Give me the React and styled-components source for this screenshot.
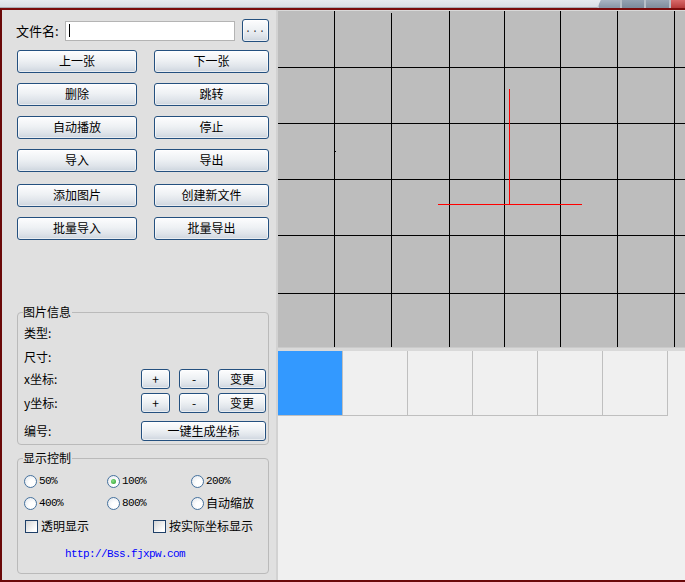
import React from 'react';
import styled, { createGlobalStyle } from 'styled-components';

// Global
const GlobalStyle = createGlobalStyle`
  html, body {
    margin: 0;
    padding: 0;
    background: #e0e0e0;
  }
  body {
    font-family: "Noto Sans CJK SC", "Noto Sans", sans-serif;
    font-size: 12px;
    color: #000;
  }
`;

// Frame
const Frame = styled.div`
  width: 685px;
  height: 582px;
  overflow: hidden;
  display: flex;
  flex-direction: column;
`;

const TopBar = styled.div`
  height: 8px;
  flex: none;
  display: flex;
  background: linear-gradient(#e7ebef, #d8dde3);
  box-shadow: inset 0 -1px 0 #a9afb6;
`;

const TopFill = styled.div`
  flex: 1;
`;

const Caption = styled.div`
  display: flex;
  width: 88px;
  clip-path: polygon(4px 0, 100% 0, 100% 100%, 0 100%);
  background: #b8c0c9;
`;

const CaptionBtn = styled.div`
  width: ${(p) => p.$w}px;
  margin-left: 2px;
  background: linear-gradient(${(p) => p.$top}, ${(p) => p.$bottom});
`;

const Window = styled.div`
  flex: 1;
  min-height: 0;
  display: flex;
  border-top: 2px solid #7a0c0c;
  border-left: 2px solid #6a0909;
  border-bottom: 2px solid #6a0909;
`;

// Left panel
const LeftPanel = styled.div`
  width: 274px;
  flex: none;
  display: flex;
  flex-direction: column;
  padding-top: 9px;
  background: #e0e0e0;
`;

const FileRow = styled.div`
  display: flex;
  align-items: center;
  height: 23px;
  padding-left: 14px;
`;

const FileLabel = styled.span`
  width: 49px;
  font-size: 13px;
  line-height: 16px;
`;

const FileInput = styled.div`
  box-sizing: border-box;
  width: 170px;
  height: 20px;
  display: flex;
  align-items: center;
  padding-left: 3px;
  background: #fff;
  border: 1px solid #b4b4b4;
`;

const Caret = styled.span`
  width: 1px;
  height: 13px;
  background: #000;
`;

const Btn = styled.button`
  box-sizing: border-box;
  width: ${(p) => (p.$w ? `${p.$w}px` : 'auto')};
  height: ${(p) => p.$h || 23}px;
  margin-top: ${(p) => p.$mt || 0}px;
  padding: 0 0 1px;
  border: 1px solid #24507f;
  border-radius: 3px;
  background: linear-gradient(#fdfdfe 0%, #eef1f4 45%, #dfe4ea 75%, #cdd5de 100%);
  box-shadow: inset 0 0 0 1px rgba(255, 255, 255, 0.55);
  font-family: "Noto Sans CJK SC", sans-serif;
  font-size: 12px;
  line-height: 14px;
  color: #000;
  text-align: center;
`;

const DotsBtn = styled(Btn)`
  margin-left: 7px;
  font-family: "Liberation Mono", monospace;
  font-size: 10px;
  letter-spacing: 1px;
  color: #333;
`;

const ButtonGrid = styled.div`
  display: grid;
  grid-template-columns: 120px 115px;
  column-gap: 17px;
  row-gap: 10px;
  margin: 8px 0 0 15px;
`;

const Group = styled.fieldset`
  box-sizing: border-box;
  width: 252px;
  min-width: 0;
  margin: ${(p) => p.$mt}px 0 0 15px;
  padding: ${(p) => p.$pad};
  border: 1px solid #bababa;
  border-radius: 4px;
`;

const Legend = styled.legend`
  padding: 0 1px 0 0;
  margin-left: -1px;
  font-size: 12px;
  line-height: 14px;
`;

const InfoList = styled.div`
  display: flex;
  flex-direction: column;
`;

const InfoRow = styled.div`
  display: flex;
  align-items: center;
  gap: 9px;
  height: 20px;
  margin-top: ${(p) => p.$mt || 0}px;
`;

const InfoLabel = styled.span`
  flex: 1;
  line-height: 14px;
`;

const RadioGrid = styled.div`
  display: grid;
  grid-template-columns: 83px 84px 1fr;
  grid-auto-rows: 18px;
  row-gap: 4px;
`;

const Option = styled.label`
  display: flex;
  align-items: center;
  gap: 2px;
`;

const Radio = styled.span`
  position: relative;
  box-sizing: border-box;
  width: 13px;
  height: 13px;
  border-radius: 50%;
  border: 1px solid #46729e;
  background: radial-gradient(circle at 65% 65%, #ffffff 30%, #dfe4ea 100%);

  &::after {
    content: '';
    display: ${(p) => (p.$on ? 'block' : 'none')};
    position: absolute;
    left: 3px;
    top: 3px;
    width: 5px;
    height: 5px;
    border-radius: 50%;
    background: radial-gradient(circle at 40% 40%, #8be08b, #1f9a1f);
  }
`;

const OptionText = styled.span`
  font-family: ${(p) => (p.$mono ? '"Liberation Mono", monospace' : '"Noto Sans CJK SC", sans-serif')};
  font-size: ${(p) => (p.$mono ? 11 : 12)}px;
  letter-spacing: ${(p) => (p.$mono ? '-0.6px' : '0')};
  line-height: 14px;
`;

const CheckRow = styled.div`
  display: grid;
  grid-template-columns: 128px 1fr;
  height: 18px;
  margin-top: 5px;
  padding-left: 1px;
`;

const CheckBox = styled.span`
  box-sizing: border-box;
  width: 13px;
  height: 13px;
  margin-right: 1px;
  border: 1px solid #1f4068;
  background: linear-gradient(135deg, #d4d4d4, #ffffff 80%);
`;

const Link = styled.a`
  display: block;
  margin-top: 12px;
  padding-left: 41px;
  height: 14px;
  font-family: "Liberation Mono", "Courier New", monospace;
  font-size: 11px;
  letter-spacing: -0.6px;
  line-height: 14px;
  color: #0000ff;
  text-decoration: none;
`;

// Right panel
const RightPanel = styled.div`
  flex: 1;
  min-width: 0;
  display: flex;
  flex-direction: column;
  border-left: 2px solid #d2d2d2;
  background: #f0f0f0;
`;

const CanvasWrap = styled.div`
  padding-top: 1px;
  background: #d9d9d9;
  line-height: 0;
`;

const Band = styled.div`
  box-sizing: border-box;
  height: 4px;
  border-top: 1px solid #cacaca;
  background: #d9d9d9;
`;

const ThumbRow = styled.div`
  display: flex;
`;

const Thumb = styled.div`
  width: 64px;
  height: 64px;
  border-right: 1px solid #bfbfbf;
  border-bottom: 1px solid #bfbfbf;
  background: ${(p) => (p.$active ? '#3399ff' : '#f0f0f0')};
`;

const GRID_X = [56, 113, 171, 226, 282, 339, 396];
const GRID_Y = [56, 112, 168, 224, 282];

const Canvas = () => (
  <svg width="407" height="336" viewBox="0 0 407 336" shapeRendering="crispEdges">
    <rect width="407" height="336" fill="#bdbdbd" />
    {GRID_X.map((x) => (
      <line key={`v${x}`} x1={x + 0.5} y1={x === 113 ? 2 : 0} x2={x + 0.5} y2="336" stroke="#000" />
    ))}
    {GRID_Y.map((y) => (
      <line key={`h${y}`} x1="0" y1={y + 0.5} x2="407" y2={y + 0.5} stroke="#000" />
    ))}
    <rect x="57" y="140" width="1" height="1" fill="#000" />
    <line x1="231.5" y1="78" x2="231.5" y2="193" stroke="#ff0000" />
    <line x1="160" y1="193.5" x2="304" y2="193.5" stroke="#ff0000" />
  </svg>
);

const NAV_BUTTONS = [
  ['上一张', '下一张'],
  ['删除', '跳转'],
  ['自动播放', '停止'],
  ['导入', '导出'],
  ['添加图片', '创建新文件'],
  ['批量导入', '批量导出'],
];

const ZOOMS = [
  { text: '50%', mono: true },
  { text: '100%', mono: true, on: true },
  { text: '200%', mono: true },
  { text: '400%', mono: true },
  { text: '800%', mono: true },
  { text: '自动缩放' },
];

const App = () => (
  <>
    <GlobalStyle />
    <Frame>
      <TopBar>
        <TopFill />
        <Caption>
          <CaptionBtn $w={22} $top="#aab5c2" $bottom="#8795a5" />
          <CaptionBtn $w={22} $top="#94a2b2" $bottom="#7b8a9b" />
          <CaptionBtn $w={24} $top="#9aa6b4" $bottom="#7f8c9b" />
          <CaptionBtn $w={14} $top="#d86a6a" $bottom="#b53a3a" />
        </Caption>
      </TopBar>
      <Window>
        <LeftPanel>
          <FileRow>
            <FileLabel>文件名:</FileLabel>
            <FileInput>
              <Caret />
            </FileInput>
            <DotsBtn $w={27}>...</DotsBtn>
          </FileRow>

          <ButtonGrid>
            {NAV_BUTTONS.map(([a, b], i) => (
              <React.Fragment key={a}>
                <Btn $mt={i === 4 ? 2 : 0}>{a}</Btn>
                <Btn $mt={i === 4 ? 2 : 0}>{b}</Btn>
              </React.Fragment>
            ))}
          </ButtonGrid>

          <Group $mt={65} $pad="4px 2px 3px 6px">
            <Legend>图片信息</Legend>
            <InfoList>
              <InfoRow><InfoLabel>类型:</InfoLabel></InfoRow>
              <InfoRow $mt={4}><InfoLabel>尺寸:</InfoLabel></InfoRow>
              <InfoRow $mt={2}>
                <InfoLabel>x坐标:</InfoLabel>
                <Btn $w={29} $h={20}>+</Btn>
                <Btn $w={30} $h={20}>-</Btn>
                <Btn $w={48} $h={20}>变更</Btn>
              </InfoRow>
              <InfoRow $mt={4}>
                <InfoLabel>y坐标:</InfoLabel>
                <Btn $w={29} $h={20}>+</Btn>
                <Btn $w={30} $h={20}>-</Btn>
                <Btn $w={48} $h={20}>变更</Btn>
              </InfoRow>
              <InfoRow $mt={8}>
                <InfoLabel>编号:</InfoLabel>
                <Btn $w={125} $h={20}>一键生成坐标</Btn>
              </InfoRow>
            </InfoList>
          </Group>

          <Group $mt={6} $pad="7px 2px 12px 6px">
            <Legend>显示控制</Legend>
            <RadioGrid>
              {ZOOMS.map((z) => (
                <Option key={z.text}>
                  <Radio $on={z.on} />
                  <OptionText $mono={z.mono}>{z.text}</OptionText>
                </Option>
              ))}
            </RadioGrid>
            <CheckRow>
              <Option>
                <CheckBox />
                <OptionText>透明显示</OptionText>
              </Option>
              <Option>
                <CheckBox />
                <OptionText>按实际坐标显示</OptionText>
              </Option>
            </CheckRow>
            <Link href="#">http://Bss.fjxpw.com</Link>
          </Group>
        </LeftPanel>

        <RightPanel>
          <CanvasWrap>
            <Canvas />
          </CanvasWrap>
          <Band />
          <ThumbRow>
            {[0, 1, 2, 3, 4, 5].map((i) => (
              <Thumb key={i} $active={i === 0} />
            ))}
          </ThumbRow>
        </RightPanel>
      </Window>
    </Frame>
  </>
);

export default App;
